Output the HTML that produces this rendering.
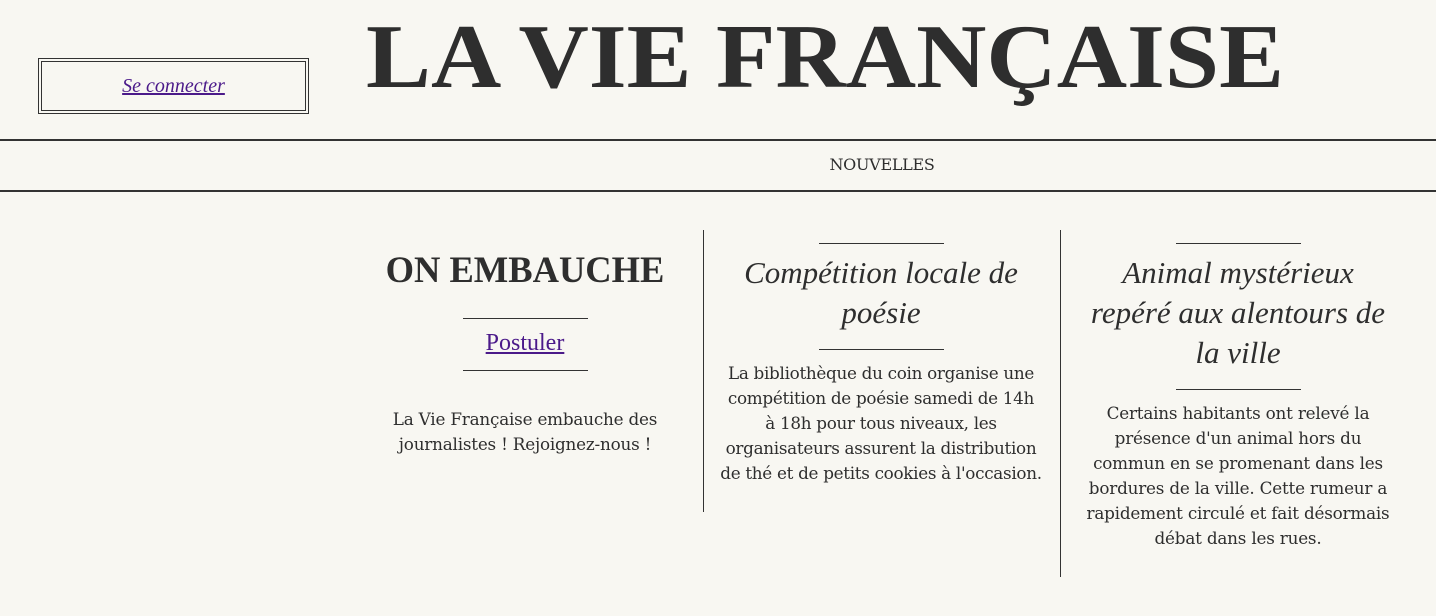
<!DOCTYPE html>
<html><head><meta charset="utf-8"><style>
*{margin:0;padding:0;box-sizing:border-box}
body{width:1436px;height:616px;background:#f8f7f2;color:#2e2e2e;font-family:"DejaVu Serif","Liberation Serif",serif;position:relative;overflow:hidden}
.abs{position:absolute}
.login{left:38px;top:58px;width:271px;height:56px;border:4px double #333;text-align:center;line-height:48px;font-style:italic}
.login a{color:#4b1a8a;font-family:"Liberation Serif",serif;font-size:20px}
.title{left:366px;top:-8px;width:919px;height:130px;overflow:visible;white-space:nowrap}
.title span{display:inline-block;font-family:"Liberation Serif",serif;font-weight:bold;font-size:91px;line-height:130px;transform-origin:0 0;transform:scaleX(1.07)}
.hr{left:0;width:1436px;height:2px;background:#333}
.nav{left:0;width:1436px;top:155px;text-align:center;font-size:16px;padding-left:328px;font-family:"DejaVu Serif",serif;letter-spacing:-0.3px}
.vl{width:1px;background:#333}
.col{text-align:center}
.sl{width:125px;height:1px;background:#333;margin:0 auto}
h2{font-family:"Liberation Serif",serif;font-weight:normal;font-style:italic;font-size:31px;line-height:40px}
p{font-size:16.8px;line-height:25px;letter-spacing:-0.2px}
</style></head><body>
<div class="abs login"><a href="#">Se connecter</a></div>
<div class="abs title"><span>LA VIE FRANÇAISE</span></div>
<div class="abs hr" style="top:139px"></div>
<div class="abs nav">NOUVELLES</div>
<div class="abs hr" style="top:190px"></div>
<div class="abs vl" style="left:703px;top:230px;height:282px"></div>
<div class="abs vl" style="left:1060px;top:230px;height:347px"></div>

<div class="abs col" style="left:367px;width:316px;top:248px">
<div style="font-family:'Liberation Serif',serif;font-weight:bold;font-size:36.5px;line-height:44px">ON EMBAUCHE</div>
<div class="sl" style="margin-top:26px"></div>
<div style="font-family:'Liberation Serif',serif;font-size:24px;line-height:48px;height:51px"><a href="#" style="color:#4b1a8a">Postuler</a></div>
<div class="sl"></div>
<p style="margin-top:36px">La Vie Française embauche des journalistes ! Rejoignez-nous !</p>
</div>

<div class="abs col" style="left:716px;width:330px;top:243px">
<div class="sl"></div>
<h2 style="margin-top:9px">Compétition locale de poésie</h2>
<div class="sl" style="margin-top:16px"></div>
<p style="margin-top:11px;letter-spacing:-0.3px;white-space:nowrap">La bibliothèque du coin organise une<br>compétition de poésie samedi de 14h<br>à 18h pour tous niveaux, les<br>organisateurs assurent la distribution<br>de thé et de petits cookies à l'occasion.</p>
</div>

<div class="abs col" style="left:1079px;width:318px;top:243px">
<div class="sl"></div>
<h2 style="margin-top:9px;padding:0 8px">Animal mystérieux repéré aux alentours de la ville</h2>
<div class="sl" style="margin-top:16px"></div>
<p style="margin-top:11px">Certains habitants ont relevé la présence d'un animal hors du commun en se promenant dans les bordures de la ville. Cette rumeur a rapidement circulé et fait désormais débat dans les rues.</p>
</div>
</body></html>
